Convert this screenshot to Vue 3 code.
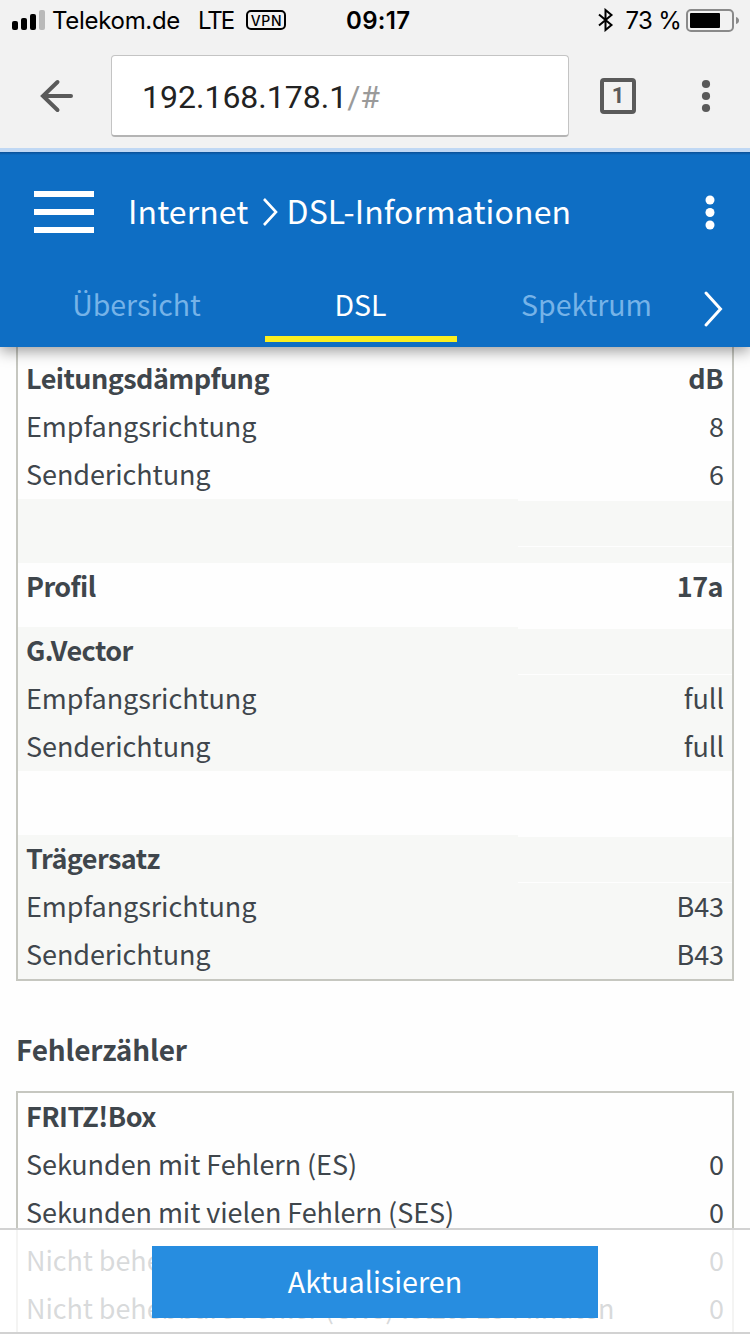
<template>
  <div class="screen">
    <div class="status-bar">
      <svg class="signal" width="34" height="22" viewBox="0 0 34 22">
        <rect x="0" y="12" width="6" height="9" rx="2" />
        <rect x="9" y="9" width="6" height="12" rx="2" />
        <rect x="18" y="5" width="6" height="16" rx="2" />
        <rect x="27" y="1" width="6" height="20" rx="2" fill="#b9b9b9" />
      </svg>
      <span class="carrier">Telekom.de</span>
      <span class="network">LTE</span>
      <span class="vpn">VPN</span>
      <span class="time">09:17</span>
      <svg class="bluetooth" width="16" height="24" viewBox="0 0 16 24">
        <path d="M1 6.5 L13.5 17 L7.5 22 V2 L13.5 7 L1 17.5" />
      </svg>
      <span class="percent">73 %</span>
      <svg class="battery" width="54" height="24" viewBox="0 0 54 24">
        <rect class="shell" x="1" y="2" width="46" height="21" rx="4" />
        <rect x="4" y="5" width="30" height="15" rx="1" />
        <path d="M50 9 Q53 10 53 12.5 Q53 15 50 16 Z" fill="#8a8a8a" />
      </svg>
    </div>

    <div class="browser-bar">
      <svg class="back" width="34" height="34" viewBox="0 0 34 34">
        <path d="M31 17 H3.5 M17.5 3 L3 17 L17.5 31" />
      </svg>
      <div class="address">192.168.178.1<span class="path">/#</span></div>
      <div class="tab-count">1</div>
      <svg class="browser-menu" width="10" height="34" viewBox="0 0 10 34">
        <circle cx="5" cy="5" r="4.1" />
        <circle cx="5" cy="17" r="4.1" />
        <circle cx="5" cy="29" r="4.1" />
      </svg>
    </div>

    <header class="header">
      <div class="title-row">
        <div class="burger"><i></i><i></i><i></i></div>
        <div class="breadcrumb">
          <span>{{ breadcrumb[0] }}</span>
          <svg width="16" height="30" viewBox="0 0 16 30">
            <path d="M2 2 L14 15 L2 28" />
          </svg>
          <span>{{ breadcrumb[1] }}</span>
        </div>
        <svg class="more" width="10" height="36" viewBox="0 0 10 36">
          <circle cx="5" cy="6" r="4.5" />
          <circle cx="5" cy="18.5" r="4.5" />
          <circle cx="5" cy="31" r="4.5" />
        </svg>
      </div>
      <nav class="tabs">
        <a
          v-for="tab in tabs"
          :key="tab"
          class="tab"
          :class="{ active: tab === activeTab }"
          @click="activeTab = tab"
          >{{ tab }}</a
        >
        <svg class="tabs-next" width="20" height="38" viewBox="0 0 20 38">
          <path d="M3 3 L17.5 19 L3 35" />
        </svg>
      </nav>
    </header>

    <main class="content">
      <div class="table line-table">
        <div
          v-for="(row, i) in lineRows"
          :key="i"
          class="row"
          :class="{ head: row.head, gray: row.gray, tall: row.tall }"
        >
          <div class="label">{{ row.label }}</div>
          <div class="value" :class="{ blank: row.gray && !row.value }">
            {{ row.value }}
          </div>
        </div>
      </div>

      <h3 class="section-title">Fehlerzähler</h3>

      <div class="table error-table">
        <div
          v-for="(row, i) in errorRows"
          :key="i"
          class="row"
          :class="{ head: row.head }"
        >
          <div class="label">{{ row.label }}</div>
          <div class="value">{{ row.value }}</div>
        </div>
      </div>
    </main>

    <footer class="footer">
      <button class="refresh" type="button">Aktualisieren</button>
    </footer>
  </div>
</template>

<script setup>
import { ref } from "vue";

const breadcrumb = ["Internet", "DSL-Informationen"];
const tabs = ["Übersicht", "DSL", "Spektrum"];
const activeTab = ref("DSL");

const lineRows = [
  { label: "Senderichtung", value: "" },
  { label: "Leitungsdämpfung", value: "dB", head: true },
  { label: "Empfangsrichtung", value: "8" },
  { label: "Senderichtung", value: "6" },
  { label: "", value: "", gray: true, tall: true },
  { label: "Profil", value: "17a", head: true, tall: true },
  { label: "G.Vector", value: "", head: true, gray: true },
  { label: "Empfangsrichtung", value: "full", gray: true },
  { label: "Senderichtung", value: "full", gray: true },
  { label: "", value: "", tall: true },
  { label: "Trägersatz", value: "", head: true, gray: true },
  { label: "Empfangsrichtung", value: "B43", gray: true },
  { label: "Senderichtung", value: "B43", gray: true },
];

const errorRows = [
  { label: "FRITZ!Box", value: "", head: true },
  { label: "Sekunden mit Fehlern (ES)", value: "0" },
  { label: "Sekunden mit vielen Fehlern (SES)", value: "0" },
  { label: "Nicht behebbare Fehler (CRC)", value: "0" },
  { label: "Nicht behebbare Fehler (CRC) letzte 15 Minuten", value: "0" },
];
</script>

<style>
body {
  margin: 0;
  background: #fff;
}
</style>

<style scoped>
.screen {
  position: relative;
  display: flex;
  flex-direction: column;
  width: 750px;
  height: 1334px;
  overflow: hidden;
  background: #fefefe;
  color: #3f464c;
  font-family: "Noto Sans CJK SC", "Noto Sans", sans-serif;
  font-size: 27px;
}

svg {
  display: block;
  flex: none;
}

/* status bar */
.status-bar {
  display: flex;
  align-items: center;
  height: 40px;
  flex: none;
  padding: 0 10px 0 12px;
  background: #f2f2f2;
  color: #000;
  font-family: Inter, "Liberation Sans", sans-serif;
  font-size: 24px;
  line-height: 40px;
  white-space: nowrap;
}

.carrier,
.network,
.time,
.percent {
  padding-top: 2px;
}

.carrier {
  margin-left: 6px;
  width: 146px;
  letter-spacing: -0.3px;
}

.network {
  width: 48px;
  letter-spacing: -2px;
}

.vpn {
  box-sizing: border-box;
  width: 40px;
  height: 20px;
  padding-left: 1px;
  border: 2px solid #000;
  border-radius: 5px;
  font-size: 14px;
  font-weight: 500;
  line-height: 17px;
  letter-spacing: 0.6px;
  text-align: center;
}

.time {
  margin-left: 60px;
  width: 70px;
  font-weight: 600;
  letter-spacing: 0.3px;
}

.bluetooth {
  margin: 0 0 0 auto;
  fill: none;
  stroke: #000;
  stroke-width: 2;
}

.percent {
  margin: 0 5px 0 11px;
  letter-spacing: -0.7px;
}

.battery .shell {
  fill: none;
  stroke: #8a8a8a;
  stroke-width: 2;
}

/* browser bar */
.browser-bar {
  position: relative;
  z-index: 2;
  display: flex;
  align-items: center;
  box-sizing: border-box;
  height: 112px;
  flex: none;
  padding: 0 39px 0 40px;
  border-bottom: 4px solid #c0d8f4;
  background: #f2f2f2;
}

.back {
  margin-top: 4px;
  fill: none;
  stroke: #5a5a5a;
  stroke-width: 4;
  stroke-linecap: round;
}

.address {
  box-sizing: border-box;
  width: 458px;
  height: 82px;
  margin: 4px 31px 0 37px;
  padding-left: 30px;
  border: 1px solid #c4c4c4;
  border-bottom: 2px solid #b4b4b4;
  border-radius: 4px;
  background: #fff;
  color: #222;
  font-family: Roboto, sans-serif;
  font-size: 32px;
  line-height: 83px;
}

.path {
  color: #9a9a9a;
}

.tab-count {
  box-sizing: border-box;
  width: 36px;
  height: 36px;
  margin-top: 4px;
  border: 4px solid #5a5a5a;
  border-radius: 4px;
  color: #5a5a5a;
  font-family: Roboto, sans-serif;
  font-size: 22px;
  font-weight: 700;
  line-height: 28px;
  text-align: center;
}

.browser-menu {
  margin: 4px 0 0 auto;
  fill: #5a5a5a;
}

/* page header */
.header {
  position: relative;
  z-index: 1;
  height: 195px;
  flex: none;
  background: linear-gradient(#0b4f96, #0e6ec4 3px);
  box-shadow: 0 4px 14px rgba(0, 0, 0, 0.4);
  color: #fff;
}

.title-row {
  display: flex;
  align-items: center;
  height: 120px;
  padding: 0 35px 0 34px;
}

.burger {
  display: flex;
  flex-direction: column;
  gap: 12px;
  width: 60px;
}

.burger i {
  height: 6px;
  background: #fff;
}

.breadcrumb {
  display: flex;
  align-items: center;
  margin-left: 34px;
  font-size: 32px;
  line-height: 56px;
  letter-spacing: 0.12px;
}

.breadcrumb span {
  height: 60px;
}

.breadcrumb svg {
  margin: 0 9px 0 13px;
  fill: none;
  stroke: #fff;
  stroke-width: 2.6;
}

.more {
  margin-left: auto;
  fill: #fff;
}

.tabs {
  display: flex;
  height: 70px;
  padding-left: 41px;
}

.tab {
  box-sizing: border-box;
  width: 192px;
  height: 70px;
  margin-right: 6px;
  padding-right: 1px;
  border-bottom: 6px solid transparent;
  color: #76b3e8;
  font-size: 28.5px;
  line-height: 64px;
  text-align: center;
}

.tab + .tab {
  margin-left: 26px;
  margin-right: 8px;
}

.tab.active {
  border-color: #fbee1f;
  color: #fff;
}

.tabs-next {
  margin: 18px 0 0 12px;
  fill: none;
  stroke: #fff;
  stroke-width: 3;
  stroke-linecap: round;
}

/* tables */
.content {
  flex: 1;
  min-height: 0;
  padding: 0 16px;
  overflow: hidden;
}

.table {
  border: 2px solid #c6c7c0;
}

/* the page is scrolled, the first row sits behind the header */
.line-table {
  margin-top: -42px;
}

.row {
  display: flex;
  height: 48px;
  line-height: 46px;
  letter-spacing: -0.08px;
  white-space: nowrap;
}

.tall {
  height: 64px;
}

.gray {
  background: #f7f8f6;
}

.head {
  font-weight: 600;
  letter-spacing: -0.55px;
}

.label {
  width: 500px;
  padding-left: 8px;
  flex: none;
  box-sizing: border-box;
}

.value {
  flex: 1;
  padding-right: 8px;
  text-align: right;
}

.head .value {
  padding-right: 9px;
}

.blank {
  height: 45px;
  border-top: 2px solid #fefefe;
  border-bottom: 1px solid #fefefe;
}

.section-title {
  margin: 0;
  height: 110px;
  font-size: 28px;
  font-weight: 600;
  line-height: 136px;
  letter-spacing: -0.15px;
}

/* footer */
.footer {
  position: absolute;
  left: 0;
  right: 0;
  bottom: 0;
  z-index: 2;
  display: flex;
  justify-content: center;
  align-items: center;
  box-sizing: border-box;
  height: 106px;
  border-top: 2px solid #d2d2d2;
  border-bottom: 2px solid #d2d2d2;
  background: rgba(255, 255, 255, 0.8);
}

.refresh {
  box-sizing: border-box;
  width: 446px;
  height: 72px;
  margin: 2px 0 0;
  padding: 0 0 2px;
  border: 0;
  background: #278de0;
  color: #fff;
  font: inherit;
  font-size: 28.7px;
  line-height: 70px;
}
</style>
